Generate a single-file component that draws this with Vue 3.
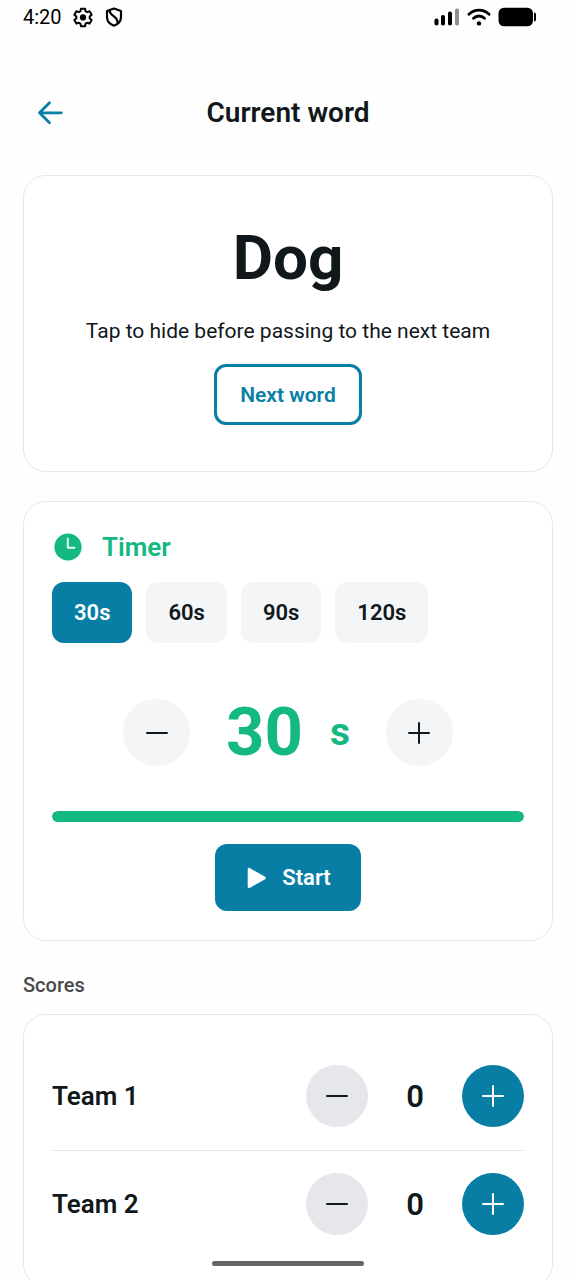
<script setup>
import { ref } from 'vue'

const presets = [30, 60, 90, 120]
const seconds = ref(30)
const selected = ref(30)
const teams = ref([
  { name: 'Team 1', score: 0 },
  { name: 'Team 2', score: 0 },
])

function choose(value) {
  selected.value = value
  seconds.value = value
}
</script>

<template>
  <div class="screen">
    <div class="status">
      <div class="status-group">
        <span class="clock">4:20</span>
        <svg class="gear" viewBox="0 0 24 24" width="22" height="22" aria-hidden="true">
          <path d="M9.8 3h4.400l.600 2.700 1.700 1 2.700-.900 2.200 3.800-2.100 1.900v2l2.100 1.900-2.200 3.800-2.700-.900-1.700 1-.600 2.700H9.800l-.600-2.700-1.700-1-2.700.900-2.200-3.800 2.100-1.900v-2L2.600 9.600l2.200-3.800 2.700.9 1.700-1z" fill="none" stroke="#000" stroke-width="2.200" stroke-linejoin="round" />
          <circle cx="12" cy="12.500" r="3.400" fill="#000" />
        </svg>
        <svg viewBox="0 0 20 22" width="20" height="22" aria-hidden="true">
          <path d="M10 2.500 17 5v6c0 4.300-2.800 7.200-7 8.700C5.800 18.200 3 15.300 3 11V5z" fill="none" stroke="#000" stroke-width="2.200" stroke-linejoin="round" />
          <path d="M5.500 4.500c0 5.500 9 5.500 8 12.500" fill="none" stroke="#000" stroke-width="2.200" />
        </svg>
      </div>
      <div class="status-group right">
        <svg viewBox="0 0 26 18" width="26" height="18" aria-hidden="true">
          <rect x="0.500" y="10.500" width="4" height="7" rx="1.800" />
          <rect x="7" y="7" width="4" height="10.500" rx="1.800" />
          <rect x="14" y="3.500" width="4" height="14" rx="1.800" />
          <rect x="21" y="0.500" width="4" height="17" rx="1.800" fill="#8f8f8f" />
        </svg>
        <svg viewBox="0 0 24 18" width="24" height="18" aria-hidden="true">
          <g fill="none" stroke="#000" stroke-width="2.900" stroke-linecap="round">
            <path d="M2 6.200c5.800-5.400 14.200-5.400 20 0" />
            <path d="M6.500 10.200c3.200-2.900 7.800-2.900 11 0" />
          </g>
          <circle cx="12" cy="15.400" r="2.200" />
        </svg>
        <svg viewBox="0 0 39 20" width="39" height="20" aria-hidden="true">
          <rect x="0.500" y="0.700" width="34.500" height="18.600" rx="5.500" />
          <path d="M36 5.500c1.500 0 2 1 2 2v5c0 1-.5 2-2 2z" />
        </svg>
      </div>
    </div>

    <header class="header">
      <button class="back" aria-label="Back">
        <svg viewBox="0 0 26 26" width="26" height="26">
          <path d="M24.300 12.800H2.500M12.500 2.800l-10 10 10 10" fill="none" stroke="currentColor" stroke-width="2.800" stroke-linecap="round" stroke-linejoin="round" />
        </svg>
      </button>
      <h1>Current word</h1>
    </header>

    <main>
      <section class="card word-card">
        <div class="word">Dog</div>
        <p>Tap to hide before passing to the next team</p>
        <button class="outline">Next word</button>
      </section>

      <section class="card timer-card">
        <h2 class="timer-title">
          <svg viewBox="0 0 28 28" width="28" height="28" aria-hidden="true">
            <circle cx="14" cy="14" r="13.600" fill="currentColor" />
            <path d="M13.800 5.500v9.300h6.700" fill="none" stroke="#e6f9f1" stroke-width="2" stroke-linecap="round" stroke-linejoin="round" />
          </svg>
          Timer
        </h2>
        <div class="presets">
          <button v-for="p in presets" :key="p" :class="{ active: p === selected }" @click="choose(p)">{{ p }}s</button>
        </div>
        <div class="dial">
          <button class="round" aria-label="Less time" @click="seconds = Math.max(0, seconds - 5)">
            <svg viewBox="0 0 22 22" width="22" height="22"><path d="M1 11h20" /></svg>
          </button>
          <div class="time"><span>{{ seconds }}</span><span class="unit">s</span></div>
          <button class="round" aria-label="More time" @click="seconds += 5">
            <svg viewBox="0 0 22 22" width="22" height="22"><path d="M1 11h20M11 1v20" /></svg>
          </button>
        </div>
        <div class="track"><div class="fill" :style="{ width: Math.min(100, (seconds / selected) * 100) + '%' }"></div></div>
        <button class="start">
          <svg viewBox="0 0 20 22" width="20" height="22" aria-hidden="true">
            <path d="M2 2.200v17.600L17.500 11z" fill="#fff" stroke="#fff" stroke-width="2.600" stroke-linejoin="round" />
          </svg>
          Start
        </button>
      </section>

      <h2 class="scores-title">Scores</h2>
      <section class="card scores-card">
        <div v-for="t in teams" :key="t.name" class="team">
          <span class="name">{{ t.name }}</span>
          <button class="round minus" :aria-label="'Remove point from ' + t.name" @click="t.score--">
            <svg viewBox="0 0 22 22" width="22" height="22"><path d="M1 11h20" /></svg>
          </button>
          <span class="score">{{ t.score }}</span>
          <button class="round plus" :aria-label="'Add point to ' + t.name" @click="t.score++">
            <svg viewBox="0 0 22 22" width="22" height="22"><path d="M1 11h20M11 1v20" /></svg>
          </button>
        </div>
      </section>
    </main>
    <div class="home"></div>
  </div>
</template>

<style>
body {
  margin: 0;
  background: #fefefe;
}
</style>

<style scoped>
.screen {
  position: relative;
  display: flex;
  flex-direction: column;
  height: 100vh;
  overflow: hidden;
  box-sizing: border-box;
  background: #fefefe;
  color: #11181c;
  font-family: Roboto, "Liberation Sans", sans-serif;
}
.screen * {
  box-sizing: border-box;
}
button {
  display: flex;
  align-items: center;
  justify-content: center;
  margin: 0;
  padding: 0;
  border: 0;
  background: none;
  color: inherit;
  font: inherit;
  cursor: pointer;
}
h1,
h2,
p {
  margin: 0;
}
svg {
  display: block;
  flex: none;
}
.status {
  flex: none;
  display: flex;
  justify-content: space-between;
  height: 33px;
  padding: 0 39px 0 23px;
}
.status-group {
  display: flex;
  align-items: center;
  gap: 10px;
}
.status-group.right {
  gap: 7px;
}
.clock {
  color: #000;
  font-size: 20px;
}
.header {
  flex: none;
  display: grid;
  grid-template-columns: 56px 1fr 56px;
  align-items: center;
  align-content: center;
  height: 142px;
  padding: 17px 22px 0;
}
.back {
  width: 56px;
  height: 56px;
  color: #087ea4;
}
h1 {
  text-align: center;
  font-size: 28px;
  line-height: 36px;
  font-weight: 600;
}
main {
  flex: 1;
  min-height: 0;
  padding: 0 23px 23px;
  overflow-y: auto;
  scrollbar-width: none;
}
.card {
  display: flex;
  flex-direction: column;
  padding: 28px;
  border: 1px solid #e5e7eb;
  border-radius: 23px;
  background: #fff;
}
.word-card {
  align-items: center;
  padding: 43px 28px 46px;
}
.word {
  font-size: 62px;
  line-height: 78px;
  font-weight: 700;
}
.word-card p {
  margin: 18px 0 17px;
  font-size: 21px;
  line-height: 32px;
  text-align: center;
}
.outline {
  height: 61px;
  padding: 0 23px;
  border: 3px solid #087ea4;
  border-radius: 12px;
  color: #087ea4;
  font-size: 21px;
  font-weight: 600;
}
.timer-card {
  margin-top: 29px;
  padding-bottom: 29px;
}
.timer-title {
  display: flex;
  align-items: center;
  gap: 20px;
  height: 34px;
  padding-left: 2px;
  color: #14b881;
  font-size: 26px;
  font-weight: 600;
}
.presets {
  display: flex;
  flex-wrap: wrap;
  gap: 14px;
  margin-top: 18px;
}
.presets button {
  height: 61px;
  padding: 0 22px;
  border-radius: 12px;
  background: #f3f5f7;
  font-size: 22px;
  font-weight: 600;
}
.presets .active {
  background: #087ea4;
  color: #fff;
}
.dial {
  display: flex;
  align-items: center;
  justify-content: center;
  gap: 36px;
  margin-top: 56px;
}
.round {
  flex: none;
  width: 67px;
  height: 67px;
  border-radius: 50%;
  background: #f3f5f7;
}
.round svg {
  fill: none;
  stroke: currentColor;
  stroke-width: 2;
  stroke-linecap: round;
}
.time {
  display: flex;
  align-items: center;
  gap: 27px;
  color: #14b881;
  font-size: 67px;
  line-height: 67px;
  font-weight: 700;
}
.unit {
  font-size: 39px;
}
.track {
  height: 11px;
  margin-top: 45px;
  border-radius: 6px;
  background: #e5e7eb;
  overflow: hidden;
}
.fill {
  height: 100%;
  border-radius: 6px;
  background: #14b881;
}
.start {
  align-self: center;
  gap: 15px;
  height: 67px;
  margin-top: 22px;
  padding: 0 30px 0 32px;
  border-radius: 12px;
  background: #087ea4;
  color: #fff;
  font-size: 22px;
  font-weight: 600;
}
.scores-title {
  margin: 30px 0 15px;
  color: #4a4a4c;
  font-size: 20px;
  line-height: 28px;
  font-weight: 500;
}
.team {
  display: flex;
  align-items: center;
  padding: 22px 0 23px;
}
.team + .team {
  border-top: 1px solid #e5e7eb;
}
.name {
  flex: 1;
  font-size: 26px;
  font-weight: 600;
}
.team .round {
  width: 62px;
  height: 62px;
}
.team .minus {
  background: #e5e7eb;
}
.team .plus {
  background: #087ea4;
  color: #fff;
}
.score {
  width: 94px;
  text-align: center;
  font-size: 31px;
  font-weight: 600;
}
.home {
  position: absolute;
  bottom: 14px;
  left: 50%;
  width: 152px;
  height: 5px;
  margin-left: -76px;
  border-radius: 3px;
  background: #666;
}
</style>
